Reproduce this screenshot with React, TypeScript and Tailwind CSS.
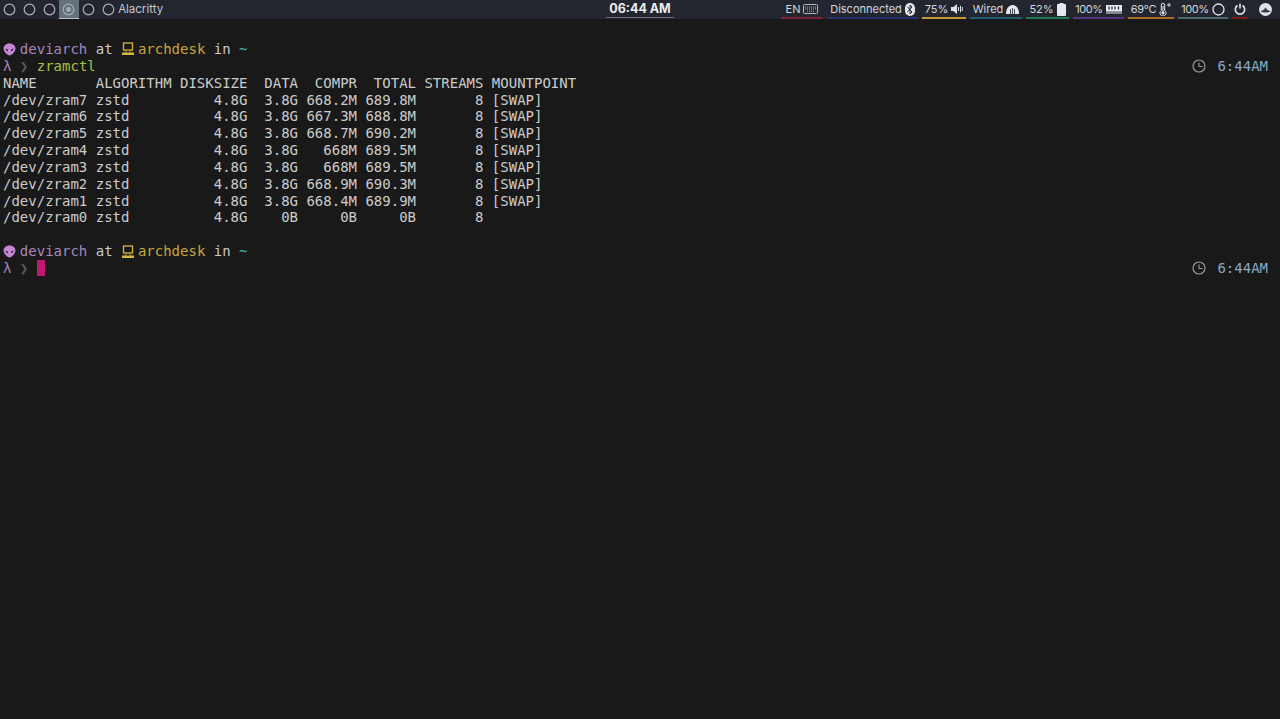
import React from "react";

const mono = "font-['DejaVu_Sans_Mono','Liberation_Mono',monospace]";

function Ring({ active }: { active?: boolean }) {
  return (
    <div className={`w-[19.7px] h-[19px] shrink-0 flex items-center justify-center ${active ? "bg-[#66717d] border-b border-[#b9c0c8]" : ""}`}>
      <svg width="13" height="13" viewBox="0 0 13 13">
        <circle cx="6.5" cy="6.5" r="5.3" fill="none" stroke={active ? "#9fb0b8" : "#a9aeb6"} strokeWidth="1.2" />
        {active && <circle cx="6.5" cy="6.5" r="2.4" fill="#9fb0b8" />}
      </svg>
    </div>
  );
}

function Mod({ w, color, children }: { w: string; color: string; children: React.ReactNode }) {
  return (
    <div className={`${w} shrink-0 h-[19px] pt-[1px] flex items-center justify-center gap-[3px] border-b-2 ${color}`}>
      {children}
    </div>
  );
}

function Keyboard() {
  return (
    <svg width="15" height="10" viewBox="0 0 15 10">
      <rect x="0.5" y="0.5" width="14" height="9" rx="1" fill="none" stroke="#b4b8c0" />
      <path d="M2 3h11M2 5h11M4 7.3h7" stroke="#b4b8c0" strokeDasharray="1 1" />
    </svg>
  );
}
function Bluetooth() {
  return (
    <svg width="10" height="13" viewBox="0 0 10 13">
      <rect width="10" height="13" rx="5" fill="#e6e8ec" />
      <path d="M2.5 4l4.5 5-2 2V2l2 2-4.5 5" fill="none" stroke="#23262f" strokeWidth="1" />
    </svg>
  );
}
function Speaker() {
  return (
    <svg width="12" height="10" viewBox="0 0 12 10">
      <path d="M0 3h2.5L6 0v10L2.5 7H0z" fill="#dfe1e6" />
      <path d="M7.5 3v4M9.5 1.8v6.4M11.3 3v4" stroke="#dfe1e6" strokeWidth="1" />
    </svg>
  );
}
function Wifi() {
  return (
    <svg width="13" height="9" viewBox="0 0 13 9">
      <path d="M0 9C0 3.500 3 0 6.500 0S13 3.500 13 9z" fill="#e6e8ec" />
      <path d="M4.500 9V4M6.500 9V3M8.500 9V4" stroke="#23262f" strokeWidth="0.8" />
    </svg>
  );
}
function Battery() {
  return (
    <svg width="9" height="13" viewBox="0 0 9 13">
      <rect x="0" y="1" width="9" height="12" rx="1" fill="#e6e8ec" />
      <rect x="2.500" y="0" width="4" height="1" fill="#e6e8ec" />
    </svg>
  );
}
function Ram() {
  return (
    <svg width="16" height="9" viewBox="0 0 16 9">
      <rect width="16" height="6.500" fill="#e6e8ec" />
      <path d="M3 1.500v3M6 1.500v3M9 1.500v3M12.500 1.500v3" stroke="#23262f" strokeWidth="1.200" />
      <path d="M1 6.500V9M3 6.500V9M5 6.500V9M7 6.500V9M9 6.500V9M11 6.500V9M13 6.500V9M15 6.500V9" stroke="#e6e8ec" strokeWidth="1" />
    </svg>
  );
}
function Thermo() {
  return (
    <svg width="12" height="13" viewBox="0 0 12 13">
      <path d="M2.300 7.500V2a1.700 1.700 0 0 1 3.400 0v5.500a3 3 0 1 1-3.400 0z" fill="none" stroke="#e6e8ec" />
      <circle cx="4" cy="9.800" r="1.600" fill="#e6e8ec" />
      <path d="M4 3v6" stroke="#e6e8ec" />
      <circle cx="10" cy="2" r="1.200" fill="none" stroke="#e6e8ec" />
    </svg>
  );
}
function Circle() {
  return (
    <svg width="13" height="13" viewBox="0 0 13 13">
      <circle cx="6.500" cy="6.500" r="5.500" fill="none" stroke="#e6e8ec" strokeWidth="1.300" />
    </svg>
  );
}
function Power() {
  return (
    <svg width="12" height="12" viewBox="0 0 12 12">
      <path d="M3.500 2.500a4.700 4.700 0 1 0 5 0M6 0.500v5" fill="none" stroke="#eceef1" strokeWidth="1.500" />
    </svg>
  );
}
function Arch() {
  return (
    <svg width="13" height="13" viewBox="0 0 13 13">
      <circle cx="6.500" cy="6.500" r="6.500" fill="#dfe2e7" />
      <path d="M1.500 8.500L5 6.500 6.500 4.500 8 6.500l3.500 2c-1.500.8-3 1-5 1s-3.500-.2-5-1z" fill="#3a3e48" />
    </svg>
  );
}
function Alien() {
  return (
    <svg width="13" height="13" viewBox="0 0 12 12">
      <path d="M6 0.500c3.200 0 5.500 2 5.500 4.600 0 3-3.600 6.400-5.500 6.400S0.500 8.100.5 5.100C.5 2.500 2.800.5 6 .5z" fill="#c586d8" />
      <path d="M2.500 5l2.300 1.500-.4 1L2.700 6.500zM9.500 5L7.200 6.500l.4 1 1.700-1z" fill="#1a1a1a" />
    </svg>
  );
}
function Desk() {
  return (
    <svg width="14" height="14" viewBox="0 0 14 14">
      <rect x="2.500" y="1" width="9" height="7" fill="none" stroke="#d9b63c" strokeWidth="1.300" />
      <path d="M5 9v1.500M9 9v1.500" stroke="#d9b63c" />
      <rect x="1" y="10.500" width="12" height="2.500" fill="#d9b63c" />
    </svg>
  );
}
function ClockBlock() {
  return (
    <div className="flex items-center gap-[11px] pr-[12px]">
      <svg width="14" height="14" viewBox="0 0 14 14">
        <circle cx="7" cy="7" r="6" fill="none" stroke="#9a9a9a" strokeWidth="1.200" />
        <path d="M7 3.500V7.500H10.500" fill="none" stroke="#9a9a9a" strokeWidth="1.100" />
      </svg>
      <span className="text-[#8aa9c6]">6:44AM</span>
    </div>
  );
}
function Prompt() {
  return (
    <div className="whitespace-pre flex items-center h-[16.85px]">
      <span className="w-[16.86px] flex items-center"><Alien /></span>
      <span className="text-[#a887b8]">deviarch</span>
      <span className="text-[#c9c9c9]"> at </span>
      <span className="w-[16.86px] flex items-center"><Desk /></span>
      <span className="text-[#c8a63a]">archdesk</span>
      <span className="text-[#c9c9c9]"> in </span>
      <span className="text-[#3fb3ad]">~</span>
    </div>
  );
}

const table = `NAME       ALGORITHM DISKSIZE  DATA  COMPR  TOTAL STREAMS MOUNTPOINT
/dev/zram7 zstd          4.8G  3.8G 668.2M 689.8M       8 [SWAP]
/dev/zram6 zstd          4.8G  3.8G 667.3M 688.8M       8 [SWAP]
/dev/zram5 zstd          4.8G  3.8G 668.7M 690.2M       8 [SWAP]
/dev/zram4 zstd          4.8G  3.8G   668M 689.5M       8 [SWAP]
/dev/zram3 zstd          4.8G  3.8G   668M 689.5M       8 [SWAP]
/dev/zram2 zstd          4.8G  3.8G 668.9M 690.3M       8 [SWAP]
/dev/zram1 zstd          4.8G  3.8G 668.4M 689.9M       8 [SWAP]
/dev/zram0 zstd          4.8G    0B     0B     0B       8`;

export default function App() {
  return (
    <div className="w-[1280px] h-[719px] bg-[#191919] overflow-hidden flex flex-col">
      <header className="h-[19px] shrink-0 bg-[#23262f] flex items-start font-['Inter',sans-serif] text-[11px] text-[#d4d6db]">
        <div className="flex-1 flex items-center">
          <Ring /><Ring /><Ring /><Ring active /><Ring /><Ring />
          <span className="text-[11.5px] text-[#c4c7cc]">Alacritty</span>
        </div>
        <div className="w-[68px] h-[18px] pt-[2px] flex items-center justify-center border-b border-[#6b6f78] font-bold text-[12.5px] text-[#eceef1] whitespace-nowrap">
          06:44 AM
        </div>
        <div className="flex-1 flex items-start gap-[4px] justify-end">
          <Mod w="w-[42px]" color="border-[#7a1f3d]"><span>EN</span><Keyboard /></Mod>
          <Mod w="w-[91px]" color="border-[#27306e]"><span>Disconnected</span><Bluetooth /></Mod>
          <Mod w="w-[44px]" color="border-[#c09a3a]"><span>75%</span><Speaker /></Mod>
          <Mod w="w-[52px]" color="border-[#1f5a6e]"><span>Wired</span><Wifi /></Mod>
          <Mod w="w-[43px]" color="border-[#1f7a50]"><span>52%</span><Battery /></Mod>
          <Mod w="w-[51px]" color="border-[#5a3080]"><span className="tracking-[-0.4px]">100%</span><Ram /></Mod>
          <Mod w="w-[46px]" color="border-[#b06a2a]"><span className="tracking-[-0.3px]">69°C</span><Thermo /></Mod>
          <Mod w="w-[50px]" color="border-[#4a6a70]"><span className="tracking-[-0.4px]">100%</span><Circle /></Mod>
          <Mod w="w-[15px]" color="border-[#7a1a1a]"><Power /></Mod>
          <div className="w-[29px] h-[18px] pt-[1px] shrink-0 flex items-center justify-center"><Arch /></div>
        </div>
      </header>
      <main className={`${mono} text-[14px] leading-[16.85px] text-[#cccccc] pt-[22px]`}>
        <div className="pl-[3px] flex flex-col">
          <Prompt />
          <div className="flex justify-between whitespace-pre h-[16.85px]">
            <div className="flex">
              <span className="text-[#a887b8]">λ</span>
              <span className="text-[#5c5c5c] font-bold"> ❯ </span>
              <span className="text-[#a8c23f]">zramctl</span>
            </div>
            <ClockBlock />
          </div>
          <pre className={`${mono} text-[14px] leading-[16.85px] text-[#cccccc]`}>{table}</pre>
          <div className="h-[16.85px]" />
          <Prompt />
          <div className="flex justify-between whitespace-pre h-[16.85px]">
            <div className="flex">
              <span className="text-[#a887b8]">λ</span>
              <span className="text-[#5c5c5c] font-bold"> ❯ </span>
              <span className="w-[8.5px] h-[16px] bg-[#c2186f] block" />
            </div>
            <ClockBlock />
          </div>
        </div>
      </main>
    </div>
  );
}
